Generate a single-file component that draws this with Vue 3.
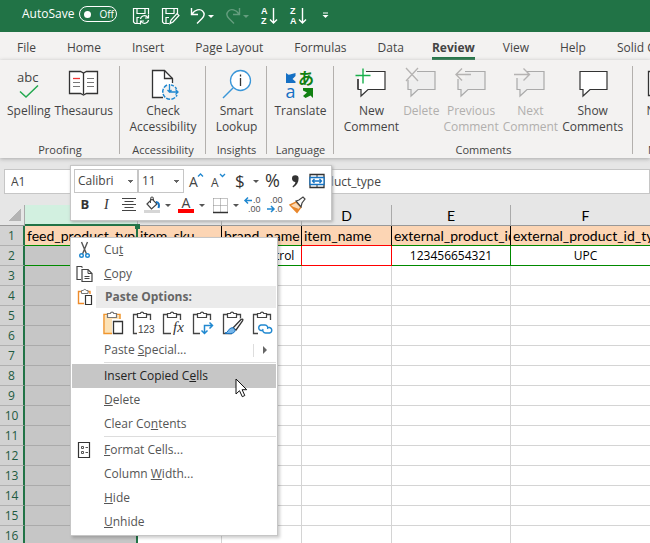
<template>
  <div class="excel">
    <header class="title-bar">
      <label class="autosave">
        AutoSave
        <input v-model="autosave" type="checkbox" />
        <span class="switch">Off</span>
      </label>
      <button
        v-for="q in quickAccess"
        :key="q.icon"
        :class="['quick', { faded: q.faded }]"
        :aria-label="q.label"
        :disabled="q.faded"
      >
        <svg width="18" height="18" viewBox="0 0 18 18" v-html="icons[q.icon]" />
        <span v-if="q.arrow" class="arrow"></span>
      </button>
      <button class="quick more" aria-label="Customize Quick Access Toolbar">
        <svg width="8" height="8" viewBox="0 0 8 8"><path d="M1 1h5" stroke="#fff" /><path d="M0.5 3h6l-3 3z" fill="#fff" /></svg>
      </button>
    </header>

    <nav class="tabs">
      <a v-for="tab in tabs" :key="tab" href="#" :class="['tab', { active: tab === activeTab }]" @click.prevent="activeTab = tab">{{ tab }}</a>
    </nav>

    <section class="ribbon">
      <div v-for="group in groups" :key="group.name" :class="['group', group.size]">
        <div class="group-tools">
          <button v-for="tool in group.tools" :key="tool.icon" class="tool" :disabled="tool.disabled">
            <svg width="32" height="32" viewBox="0 0 32 32" v-html="icons[tool.icon]" />
            <span v-for="line in tool.lines" :key="line">{{ line }}</span>
          </button>
        </div>
        <div class="group-name">{{ group.name }}</div>
      </div>
    </section>

    <div class="formula-bar">
      <input class="name-box" aria-label="Name box" value="A1" />
      <input class="formula" aria-label="Formula" value="feed_product_type" />
    </div>

    <main class="sheet">
      <table>
        <colgroup>
          <col class="w-head" />
          <col v-for="c in columns" :key="c" :class="'w-' + c.toLowerCase()" />
        </colgroup>
        <thead>
          <tr>
            <th class="corner"></th>
            <th v-for="c in columns" :key="c" :class="{ picked: c === 'A' }">{{ c }}</th>
          </tr>
        </thead>
        <tbody>
          <tr v-for="n in 16" :key="n" :class="'row-' + n">
            <th>{{ n }}</th>
            <td v-for="c in columns" :key="c" :class="'col-' + c.toLowerCase()">{{ cells[c + n] }}</td>
          </tr>
        </tbody>
      </table>
      <span class="fill-handle"></span>
    </main>

    <div class="mini-bar">
      <div class="mini-row">
        <select class="font-name" aria-label="Font"><option>Calibri</option></select>
        <select class="font-size" aria-label="Font size"><option>11</option></select>
        <button v-for="m in miniTop" :key="m.icon" class="mini" :class="{ 'has-arrow': m.arrow }" :aria-label="m.label">
          <svg width="18" height="18" viewBox="0 0 18 18" v-html="icons[m.icon]" />
          <span v-if="m.arrow" class="arrow"></span>
        </button>
      </div>
      <div class="mini-row">
        <button v-for="m in miniBottom" :key="m.icon" class="mini" :class="{ 'has-arrow': m.arrow }" :aria-label="m.label">
          <svg width="18" height="18" viewBox="0 0 18 18" v-html="icons[m.icon]" />
          <span v-if="m.arrow" class="arrow"></span>
        </button>
      </div>
    </div>

    <div class="menu" role="menu">
      <template v-for="item in menu" :key="item.id">
        <hr v-if="item.type === 'line'" />
        <div v-else-if="item.type === 'heading'" class="menu-heading">
          <svg width="18" height="18" viewBox="0 0 18 18" v-html="icons.paste" />
          <span>Paste Options:</span>
        </div>
        <div v-else-if="item.type === 'paste'" class="paste-row">
          <button v-for="p in pasteOptions" :key="p.icon" :aria-label="p.label">
            <svg width="24" height="26" viewBox="0 0 24 26" v-html="icons[p.icon]" />
          </button>
        </div>
        <button v-else :class="['menu-item', { hovered: item.hovered }]" role="menuitem">
          <span class="menu-icon"><svg v-if="item.icon" width="18" height="18" viewBox="0 0 18 18" v-html="icons[item.icon]" /></span>
          <span class="menu-text">{{ item.text[0] }}<u>{{ item.text[1] }}</u>{{ item.text[2] }}</span>
          <span v-if="item.submenu" class="submenu"></span>
        </button>
      </template>
    </div>

    <svg class="pointer" width="14" height="21" viewBox="0 0 14 21">
      <path d="M1 1v15l3.5-3.3 2.8 6 2.5-1.2-2.7-5.8h4.6z" fill="#fff" stroke="#111" />
    </svg>
  </div>
</template>

<script setup>
import { ref } from 'vue'

const autosave = ref(false)
const activeTab = ref('Review')

const tabs = ['File', 'Home', 'Insert', 'Page Layout', 'Formulas', 'Data', 'Review', 'View', 'Help', 'Solid Commerce']

const quickAccess = [
  { icon: 'saveSync', label: 'Save' },
  { icon: 'saveEdit', label: 'Save As' },
  { icon: 'undo', label: 'Undo', arrow: true },
  { icon: 'redo', label: 'Redo', arrow: true, faded: true },
  { icon: 'sortAz', label: 'Sort A to Z' },
  { icon: 'sortZa', label: 'Sort Z to A' },
]

const groups = [
  {
    name: 'Proofing',
    size: 'g-proofing',
    tools: [
      { icon: 'spelling', lines: ['Spelling'] },
      { icon: 'thesaurus', lines: ['Thesaurus'] },
    ],
  },
  { name: 'Accessibility', size: 'g-access', tools: [{ icon: 'check', lines: ['Check', 'Accessibility'] }] },
  { name: 'Insights', size: 'g-insights', tools: [{ icon: 'lookup', lines: ['Smart', 'Lookup'] }] },
  { name: 'Language', size: 'g-language', tools: [{ icon: 'translate', lines: ['Translate'] }] },
  {
    name: 'Comments',
    size: 'g-comments',
    tools: [
      { icon: 'newComment', lines: ['New', 'Comment'] },
      { icon: 'deleteComment', lines: ['Delete'], disabled: true },
      { icon: 'prevComment', lines: ['Previous', 'Comment'], disabled: true },
      { icon: 'nextComment', lines: ['Next', 'Comment'], disabled: true },
      { icon: 'showComments', lines: ['Show', 'Comments'] },
    ],
  },
  { name: 'Notes', size: 'g-notes', tools: [{ icon: 'notes', lines: ['Notes'] }] },
]

const columns = ['A', 'B', 'C', 'D', 'E', 'F']

const cells = {
  A1: 'feed_product_type',
  B1: 'item_sku',
  C1: 'brand_name',
  D1: 'item_name',
  E1: 'external_product_id',
  F1: 'external_product_id_type',
  C2: 'Gas Control',
  E2: '123456654321',
  F2: 'UPC',
}

const miniTop = [
  { icon: 'grow', label: 'Increase Font Size' },
  { icon: 'shrink', label: 'Decrease Font Size' },
  { icon: 'dollar', label: 'Accounting Number Format', arrow: true },
  { icon: 'percent', label: 'Percent Style' },
  { icon: 'comma', label: 'Comma Style' },
  { icon: 'merge', label: 'Merge & Center' },
]

const miniBottom = [
  { icon: 'bold', label: 'Bold' },
  { icon: 'italic', label: 'Italic' },
  { icon: 'center', label: 'Center' },
  { icon: 'fill', label: 'Fill Color', arrow: true },
  { icon: 'fontColor', label: 'Font Color', arrow: true },
  { icon: 'borders', label: 'Borders', arrow: true },
  { icon: 'decMore', label: 'Increase Decimal' },
  { icon: 'decLess', label: 'Decrease Decimal' },
  { icon: 'painter', label: 'Format Painter' },
]

const pasteOptions = [
  { icon: 'pasteAll', label: 'Paste' },
  { icon: 'pasteValues', label: 'Values' },
  { icon: 'pasteFormulas', label: 'Formulas' },
  { icon: 'pasteTranspose', label: 'Transpose' },
  { icon: 'pasteFormat', label: 'Formatting' },
  { icon: 'pasteLink', label: 'Paste Link' },
]

// text is split around the underlined access key
const menu = [
  { id: 1, icon: 'cut', text: ['Cu', 't', ''] },
  { id: 2, icon: 'copy', text: ['', 'C', 'opy'] },
  { id: 3, type: 'heading' },
  { id: 4, type: 'paste' },
  { id: 5, text: ['Paste ', 'S', 'pecial...'], submenu: true },
  { id: 6, type: 'line' },
  { id: 7, text: ['Insert Copied C', 'e', 'lls'], hovered: true },
  { id: 8, text: ['', 'D', 'elete'] },
  { id: 9, text: ['Clear Co', 'n', 'tents'] },
  { id: 10, type: 'line' },
  { id: 11, icon: 'format', text: ['', 'F', 'ormat Cells...'] },
  { id: 12, text: ['Column ', 'W', 'idth...'] },
  { id: 13, text: ['', 'H', 'ide'] },
  { id: 14, text: ['', 'U', 'nhide'] },
]

const sans = 'font-family="Open Sans, sans-serif"'
const arial = 'font-family="Liberation Sans, sans-serif"'
const clip = '<path d="M5 4.5H1.5v19H10M15 4.5h3.5V10" fill="none" stroke="#444" stroke-width="1.3"/><path d="M5.5 7.5v-4h2.8a1.8 1.8 0 0 1 3.5 0h2.7v4z" fill="#fff" stroke="#444" stroke-width="1.2"/>'
const floppy = '<path d="M8 16.500H3L1.500 15V1.500h15V7M5 1.500v5h8v-5M5 16.500v-6h3" fill="none" stroke="#fff" stroke-width="1.2"/>'
const sortArrow = '<path d="M13.500 1v15M10 12.500l3.500 3.500 3.500-3.500" fill="none" stroke="#fff" stroke-width="1.4"/>'
const bubble = (stroke, fill) => `<path d="M3 4.500h27v18H13l-7 6.500v-6.500H3z" fill="${fill}" stroke="${stroke}" stroke-width="1.2"/>`

const icons = {
  saveSync: floppy + '<circle cx="12.500" cy="12.500" r="5.500" fill="#217346"/><path d="M8.500 12a4 4 0 0 1 7.300-1.500M16.500 7.500v3.500h-3.500M16.500 13a4 4 0 0 1-7.300 1.500M8.500 17.500V14H12" fill="none" stroke="#fff" stroke-width="1.2"/>',
  saveEdit: floppy + '<path d="M9 16.500l1-3.500 6-6.500 2 2-6 6.500z" fill="#217346" stroke="#fff" stroke-width="1.2"/>',
  undo: '<path d="M1.500 1v6.500H8M2 7c3-4.500 8-5.500 10.500-3s2 5-.5 7.500L7 16.500" fill="none" stroke="#fff" stroke-width="1.4"/>',
  redo: '<path d="M14.500 1v6.500H8M14 7c-3-4.500-8-5.500-10.500-3s-2 5 .5 7.500L9 16.500" fill="none" stroke="#fff" stroke-width="1.4"/>',
  sortAz: `<g fill="#fff" font-weight="700" font-size="9" ${arial}><text x="1" y="7">A</text><text x="1" y="17">Z</text></g>${sortArrow}`,
  sortZa: `<g fill="#fff" font-weight="700" font-size="9" ${arial}><text x="1" y="7">Z</text><text x="1" y="17">A</text></g>${sortArrow}`,

  spelling: `<text x="4" y="15" font-size="13" fill="#444" ${sans}>abc</text><path d="M7 24.500l6 5.500L25 18.500" fill="none" stroke="#22a84f" stroke-width="1.5"/>`,
  thesaurus: '<path d="M1.500 4.500h11l3 1.500 3-1.500h11v22h-11l-3 1.500-3-1.500h-11z" fill="#fff" stroke="#333" stroke-width="1.300"/><path d="M15.500 6v21" stroke="#333" stroke-width="1.300"/><path d="M5 11.500h7" stroke="#e33" stroke-width="1.300"/><path d="M5 15.500h7M5 19.500h7M19 11.500h7M19 15.500h7M19 19.500h7" stroke="#777"/>',
  check: '<path d="M16 30.500H5.500v-27h12l8 8V16" fill="#fff" stroke="#333" stroke-width="1.300"/><path d="M17.500 3.500v8h8" fill="none" stroke="#333" stroke-width="1.300"/><circle cx="23" cy="25" r="7.500" fill="#f3f2f1"/><path d="M20 18a7.500 7.500 0 1 0 10 10" fill="none" stroke="#2088d0" stroke-width="1.500" stroke-dasharray="4 1.300"/><path d="M24 18a7.500 7.500 0 0 1 5.500 4" fill="none" stroke="#2088d0" stroke-width="1.500" stroke-dasharray="3 1.500"/><path d="M22.500 17v8h8M20.500 23l2 2 2-2M28.500 22.500l2.500 2.500-2.500 2.500" fill="none" stroke="#2088d0" stroke-width="1.300"/>',
  lookup: '<circle cx="19.500" cy="13.500" r="10" fill="#fff" stroke="#3a96d8" stroke-width="1.300"/><path d="M12 21L2 31" stroke="#3a96d8" stroke-width="1.500"/><path d="M19.500 11v8M19.500 7.500v2" stroke="#333" stroke-width="1.300"/>',
  translate: `<path d="M2 6l2.500 1.800L6 7.500 11.500 6v3L8.500 12l3 2.500V16H2z" fill="#1570c4"/><text x="1.500" y="31" font-size="18" fill="#1570c4" ${sans}>a</text><text x="14" y="17" font-size="16" font-weight="700" fill="#118011" font-family="Noto Sans CJK JP, sans-serif">あ</text><path d="M19 21h10v10l-2.500-2.500-5 2.500-2.500-2 4-3.500-4-2z" fill="#118011"/>`,
  newComment: bubble('#333', '#fff') + '<path d="M0 0h11v12H0z" fill="#f3f2f1"/><path d="M8 5h4v7H4V9z" fill="#fff"/><path d="M3 12v10" stroke="#333" stroke-width="1.200"/><path d="M8 1.500v15M.5 8.500h15" stroke="#18b04b" stroke-width="1.400"/>',
  deleteComment: bubble('#aaa', '#eee') + '<path d="M0 0h12v13H0z" fill="#f3f2f1"/><path d="M1 1l12 13M13 1L1 14" stroke="#b5b3b2" stroke-width="1.300"/>',
  prevComment: bubble('#aaa', '#eee') + '<path d="M0 0h10v12H0z" fill="#f3f2f1"/><path d="M16 7.500H1M7 1.500l-6 6 6 6" fill="none" stroke="#b5b3b2" stroke-width="1.400"/>',
  nextComment: bubble('#aaa', '#eee') + '<path d="M0 0h12v11H0z" fill="#f3f2f1"/><path d="M0 7.500h15M9.500 1.500l6 6-6 6" fill="none" stroke="#b5b3b2" stroke-width="1.400"/>',
  showComments: bubble('#333', '#fff'),
  notes: '<path d="M1.500 4.500h28v24h-28z" fill="#fff" stroke="#333" stroke-width="1.300"/>',

  grow: `<text x="3" y="15" font-size="14" fill="#444" ${sans}>A</text><path d="M12 4.500L14.500 2 17 4.500" fill="none" stroke="#2088d0" stroke-width="1.300"/>`,
  shrink: `<text x="3" y="15" font-size="12" fill="#444" ${sans}>A</text><path d="M12 2l2.500 2.500L17 2" fill="none" stroke="#2088d0" stroke-width="1.300"/>`,
  dollar: `<text x="4" y="15" font-size="17" fill="#333" ${sans}>$</text>`,
  percent: `<text x="1" y="15" font-size="18" fill="#333" ${sans}>%</text>`,
  comma: '<path d="M6 6.500a3.300 3.300 0 1 1 6.600 0c0 4-2 7-5.500 9l-.6-1.200c1.800-1.300 2.700-2.700 2.900-4.300A3.300 3.300 0 0 1 6 6.500z" fill="#333"/>',
  merge: '<path d="M2 2.500h14v13H2z" fill="#fff" stroke="#333" stroke-width="1.300"/><path d="M9 2.500V5M9 13v2.500" stroke="#333"/><path d="M2 5.500h14v7H2zM4.500 9h9M6.500 7l-2 2 2 2M11.500 7l2 2-2 2" fill="#fff" stroke="#1673c2" stroke-width="1.300"/>',
  bold: `<text x="4.500" y="13" font-size="13" font-weight="700" fill="#333" ${sans}>B</text>`,
  italic: '<text x="6" y="13" font-size="14" font-style="italic" fill="#333" font-family="Liberation Serif, serif">I</text>',
  center: '<path d="M2 2.500h14M4.500 5.500h9M2 8.500h14M4.500 11.500h9M2 14.500h14" stroke="#444"/>',
  fill: '<path d="M4 8l5-5 5 5-5.500 5z" fill="#fff" stroke="#444" stroke-width="1.200"/><path d="M7.500 7V2.500a1.500 1.500 0 0 1 3 0V5" fill="none" stroke="#444"/><path d="M13 6c3 0 3.500 3 2.500 6" fill="none" stroke="#1673c2" stroke-width="2"/><path d="M1 14h16v3H1z" fill="#d6d6d6"/>',
  fontColor: `<text x="4.500" y="12" font-size="14" fill="#444" ${sans}>A</text><path d="M1 13h16v4H1z" fill="#f00"/>`,
  borders: '<path d="M2.500 2.500h14v13M2.500 2.500v13M9.500 2.500v13M2.500 9.500h14" fill="none" stroke="#888" stroke-dasharray="1 1"/><path d="M2 16.500h15" stroke="#333" stroke-width="1.500"/>',
  decMore: `<g font-size="9" fill="#555" ${arial}><text x="9" y="7">.0</text><text x="4" y="16">.00</text></g><path d="M8 4.500H1M4 1.500l-3 3 3 3" fill="none" stroke="#2088d0" stroke-width="1.500"/>`,
  decLess: `<g font-size="9" fill="#555" ${arial}><text x="4" y="7">.00</text><text x="9" y="16">.0</text></g><path d="M1 13h7M5 10l3 3-3 3" fill="none" stroke="#2088d0" stroke-width="1.500"/>`,
  painter: '<path d="M2 9l6-3 5 5-4 5.500z" fill="#fbd9b5" stroke="#e8862a" stroke-width="1.400"/><path d="M3 10l6 6 2-3z" fill="#e8862a"/><path d="M8 5l3-1 4-3 2 2-3 4-1 4z" fill="#fff" stroke="#444" stroke-width="1.200"/>',

  cut: '<path d="M5.500 1l5 12M11.500 1l-5 12" fill="none" stroke="#555" stroke-width="1.400"/><circle cx="5.500" cy="14.500" r="1.800" fill="#fff" stroke="#2088d0" stroke-width="1.400"/><circle cx="11.500" cy="14.500" r="1.800" fill="#fff" stroke="#2088d0" stroke-width="1.400"/>',
  copy: '<path d="M5 14.500H1v-13h4.500l1 1" fill="none" stroke="#444" stroke-width="1.200"/><path d="M6 4.500h6l4 4v8H6z" fill="#fff" stroke="#444" stroke-width="1.200"/><path d="M12 4.500v4h4M8.500 11.500h5M8.500 13.500h5" fill="none" stroke="#444"/>',
  paste: '<path d="M5 3.500H2.500v12H8M12 3.500h2V6" fill="none" stroke="#ee8b2a" stroke-width="1.400"/><path d="M5.500 5.500v-3h1.800a1.500 1.500 0 0 1 2.900 0H12v3z" fill="#fff" stroke="#777"/><path d="M9.500 7.500h6v9h-6z" fill="#fff" stroke="#333" stroke-width="1.200"/>',
  format: '<path d="M2.500 1.500h11v15h-11z" fill="#fff" stroke="#333" stroke-width="1.200"/><path d="M5.500 5.500h2v2h-2zM5.500 10.500h2v2h-2zM9.500 6.500H12M9.500 11.500H12" fill="none" stroke="#555"/>',

  pasteAll: '<path d="M3 6v17h7V9h8V6z" fill="#fce2b6"/><path d="M5 4.500H2v19h8M15 4.500h3V9" fill="none" stroke="#f0962e" stroke-width="1.500"/><path d="M5.500 7.500v-4h2.800a1.800 1.800 0 0 1 3.500 0h2.700v4z" fill="#fff" stroke="#777" stroke-width="1.200"/><path d="M11.500 11.500h9v12h-9z" fill="#fff" stroke="#333" stroke-width="1.300"/>',
  pasteValues: clip + `<path d="M5 13h18v12H5z" fill="#fff"/><text x="6" y="23" font-size="10" fill="#444" ${arial}>123</text>`,
  pasteFormulas: clip + '<path d="M9 10h14v15H9z" fill="#fff"/><text x="11" y="22" font-size="15" font-style="italic" fill="#333" font-family="Liberation Serif, serif">fx</text>',
  pasteTranspose: clip + '<path d="M8 12h14v13H8z" fill="#fff"/><path d="M12.500 23.500v-8h8M17.500 12.500l3 3-3 3M9.500 20.500l3 3 3-3" fill="none" stroke="#2088d0" stroke-width="1.500"/>',
  pasteFormat: clip + '<path d="M8 17L19 8l3 3-9 12z" fill="#fff"/><path d="M11 18l8-8.500c1.500-1 2.500 0 1.500 1.500L14 20z" fill="#fff" stroke="#333" stroke-width="1.300"/><path d="M3 23c3 0 3-4 6-5s5 2 3.500 4-6 2-9.500 1z" fill="#76b6ea" stroke="#1673c2"/>',
  pasteLink: clip + '<path d="M6 13h18v12H6z" fill="#fff"/><path d="M11 20.500H9a2.800 2.800 0 0 1 0-5.500h4a2.800 2.800 0 0 1 2.500 4M15.500 17.500h2a2.800 2.800 0 0 1 0 5.500h-4a2.800 2.800 0 0 1-2.500-4" fill="none" stroke="#2088d0" stroke-width="1.400"/>',
}
</script>

<style>
body {
  margin: 0;
  overflow: hidden;
}
</style>

<style scoped>
.excel {
  position: relative;
  height: 100vh;
  overflow: hidden;
  background: #e6e6e6;
  color: #444;
  font-family: 'Open Sans', 'Noto Sans', sans-serif;
  font-size: 12px;
  line-height: 16px;
}
button,
input,
select {
  font: inherit;
  color: inherit;
}
button {
  padding: 0;
  border: none;
  background: none;
}
svg {
  display: block;
  flex: none;
  overflow: visible;
}

/* title bar */
.title-bar {
  display: flex;
  align-items: center;
  gap: 11px;
  height: 32px;
  padding-left: 22px;
  background: #217346;
  color: #fff;
}
.autosave {
  display: flex;
  align-items: center;
  gap: 5px;
  margin-right: 4px;
  padding-bottom: 4px;
}
.autosave input {
  position: absolute;
  opacity: 0;
}
.switch {
  display: flex;
  align-items: center;
  gap: 8px;
  box-sizing: border-box;
  width: 38px;
  height: 16px;
  padding-left: 4px;
  border: 1px solid #fff;
  border-radius: 8px;
  font-size: 10px;
}
.switch::before {
  content: '';
  width: 7px;
  height: 7px;
  border-radius: 50%;
  background: #fff;
}
.quick {
  display: flex;
  align-items: center;
}
.quick.faded {
  opacity: 0.3;
}
.quick.more {
  margin-left: 4px;
}
.arrow {
  flex: none;
  border: 3px solid transparent;
  border-top-color: currentColor;
  border-bottom: none;
}

/* tabs */
.tabs {
  display: flex;
  gap: 31px;
  height: 28px;
  padding-left: 17px;
  overflow: hidden;
  background: #f3f2f1;
}
.tab {
  flex: none;
  box-sizing: border-box;
  padding-top: 8px;
  color: #444;
  text-decoration: none;
  white-space: nowrap;
}
.tab.active {
  margin: 0 -3px;
  border-bottom: 3px solid #217346;
  font-weight: 700;
}

/* ribbon */
.ribbon {
  position: relative;
  display: flex;
  height: 98px;
  overflow: hidden;
  background: #f3f2f1;
  box-shadow: 0 1px 4px #aaa;
}
.group {
  display: flex;
  flex: none;
  flex-direction: column;
  box-sizing: border-box;
  position: relative;
}
.group::after {
  content: '';
  position: absolute;
  top: 6px;
  right: 0;
  bottom: 4px;
  width: 1px;
  background: #b3b0ad;
}
.g-proofing {
  width: 120px;
}
.g-access {
  width: 86px;
}
.g-insights {
  width: 61px;
}
.g-language {
  width: 67px;
}
.g-comments {
  width: 299px;
}
.g-notes {
  width: 60px;
}
.group-tools {
  display: flex;
  flex: 1;
  justify-content: center;
  gap: 4px;
  padding-top: 7px;
}
.tool {
  display: flex;
  flex-direction: column;
  align-items: center;
  white-space: nowrap;
}
.tool svg {
  margin-bottom: 4px;
}
.tool:disabled {
  color: #b1afad;
}
.group-name {
  height: 16px;
  font-size: 11px;
  text-align: center;
}

/* formula bar */
.formula-bar {
  display: flex;
  gap: 166px;
  padding: 11px 0 11px 4px;
}
.formula-bar input {
  box-sizing: border-box;
  height: 25px;
  padding: 0 6px;
  border: 1px solid #c6c6c6;
  background: #fff;
  outline: none;
}
.name-box {
  width: 100px;
}
.formula {
  flex: 1;
  min-width: 0;
}

/* sheet */
.sheet {
  position: relative;
  color: #000;
  font-family: Lato, 'Open Sans', sans-serif;
  font-size: 14px;
}
table {
  width: 661px;
  min-width: 100%;
  border-collapse: separate;
  border-spacing: 0;
  table-layout: fixed;
  background: #fff;
}
.w-head {
  width: 25px;
}
.w-a {
  width: 113px;
}
.w-b {
  width: 84px;
}
.w-c {
  width: 80px;
}
.w-d {
  width: 90px;
}
.w-e {
  width: 119px;
}
.w-f {
  width: 150px;
}
th,
td {
  box-sizing: border-box;
  height: 20px;
  padding: 0 2px;
  border-right: 1px solid #d4d4d4;
  border-bottom: 1px solid #d4d4d4;
  overflow: hidden;
  line-height: 19px;
  white-space: nowrap;
}
th {
  border-color: #aaa;
  background: #e6e6e6;
  font-weight: 400;
}
thead th {
  border-bottom-color: #999;
}
thead .picked {
  background: #d2f0e0;
  border-bottom: 2px solid #217346;
}
.corner {
  background: linear-gradient(135deg, #e6e6e6 50%, #b4b4b4 50%) 9px 4px / 12px 12px no-repeat #e6e6e6;
}
tbody th {
  border-right: 2px solid #217346;
  border-bottom-color: #b0b0b0;
  background: #d2d2d2;
  color: #1f5b41;
  font-family: 'Open Sans', sans-serif;
  font-size: 12px;
}
.col-a {
  border-right: 2px solid #217346;
  border-bottom-color: #aaa;
  background: #c6c6c6;
}
.row-1 td {
  border-right-color: #000;
  border-bottom: 1px solid #008a00;
  background: #fcd5b4;
}
.row-2 td {
  border-right-color: #008a00;
  border-bottom: 1px solid #008a00;
  font-family: 'Open Sans', sans-serif;
  font-size: 12px;
  text-align: center;
}
.row-1 .col-a,
.row-2 .col-a {
  border-right-color: #217346;
}
.row-1 .col-d,
.row-2 .col-d {
  border-bottom: 1px solid #f00;
}
.row-2 .col-c,
.row-2 .col-d {
  border-right: 1px solid #f00;
}
.fill-handle {
  position: absolute;
  top: 19px;
  left: 135px;
  width: 5px;
  height: 5px;
  background: #217346;
}

/* floating format bar */
.mini-bar {
  position: absolute;
  top: 165px;
  left: 70px;
  box-sizing: border-box;
  width: 262px;
  padding: 3px;
  border: 1px solid #c6c6c6;
  background: #fff;
  box-shadow: 1px 1px 3px #aaa;
}
.mini-row {
  display: flex;
  align-items: center;
  height: 24px;
}
.mini-row select {
  box-sizing: border-box;
  height: 24px;
  padding: 0 3px;
  border: 1px solid #c6c6c6;
  border-radius: 0;
  appearance: none;
  background: conic-gradient(from -45deg at 50% 100%, #666 90deg, transparent 0) right 4px center / 5px 3px no-repeat #fff;
}
.font-name {
  width: 64px;
}
.font-size {
  width: 46px;
}
.mini {
  display: flex;
  align-items: center;
  justify-content: center;
  width: 22px;
  color: #555;
}
.mini.has-arrow {
  width: 34px;
  gap: 4px;
}

/* context menu */
.menu {
  position: absolute;
  top: 237px;
  left: 70px;
  box-sizing: border-box;
  width: 208px;
  padding-bottom: 1px;
  border: 1px solid #c6c6c6;
  background: #fff;
  box-shadow: 2px 2px 3px rgba(0, 0, 0, 0.2);
  color: #555;
}
.menu-item {
  display: flex;
  align-items: center;
  box-sizing: border-box;
  width: 100%;
  height: 24px;
  border: solid #fff;
  border-width: 0 1px;
  text-align: left;
}
.menu-item.hovered {
  background: #c6c6c6;
  color: #222;
}
.menu-icon {
  width: 28px;
  padding-left: 4px;
}
.menu-text {
  flex: 1;
}
.submenu {
  display: flex;
  align-items: center;
  height: 13px;
  padding: 0 9px;
  border-left: 1px solid #ddd;
}
.submenu::after {
  content: '';
  border: 4px solid transparent;
  border-left-color: #666;
  border-right: none;
}
.menu-heading {
  display: flex;
  align-items: center;
  gap: 2px;
  height: 22px;
  padding: 0 1px 0 5px;
  font-weight: 700;
}
.menu-heading span {
  flex: 1;
  padding: 3px 9px;
  background: #ebebeb;
  color: #666;
}
.paste-row {
  display: flex;
  gap: 6px;
  height: 30px;
  padding-left: 31px;
}
hr {
  height: 1px;
  margin: 0 1px 1px 33px;
  border: none;
  background: #ddd;
}
.pointer {
  position: absolute;
  top: 378px;
  left: 235px;
}
</style>
